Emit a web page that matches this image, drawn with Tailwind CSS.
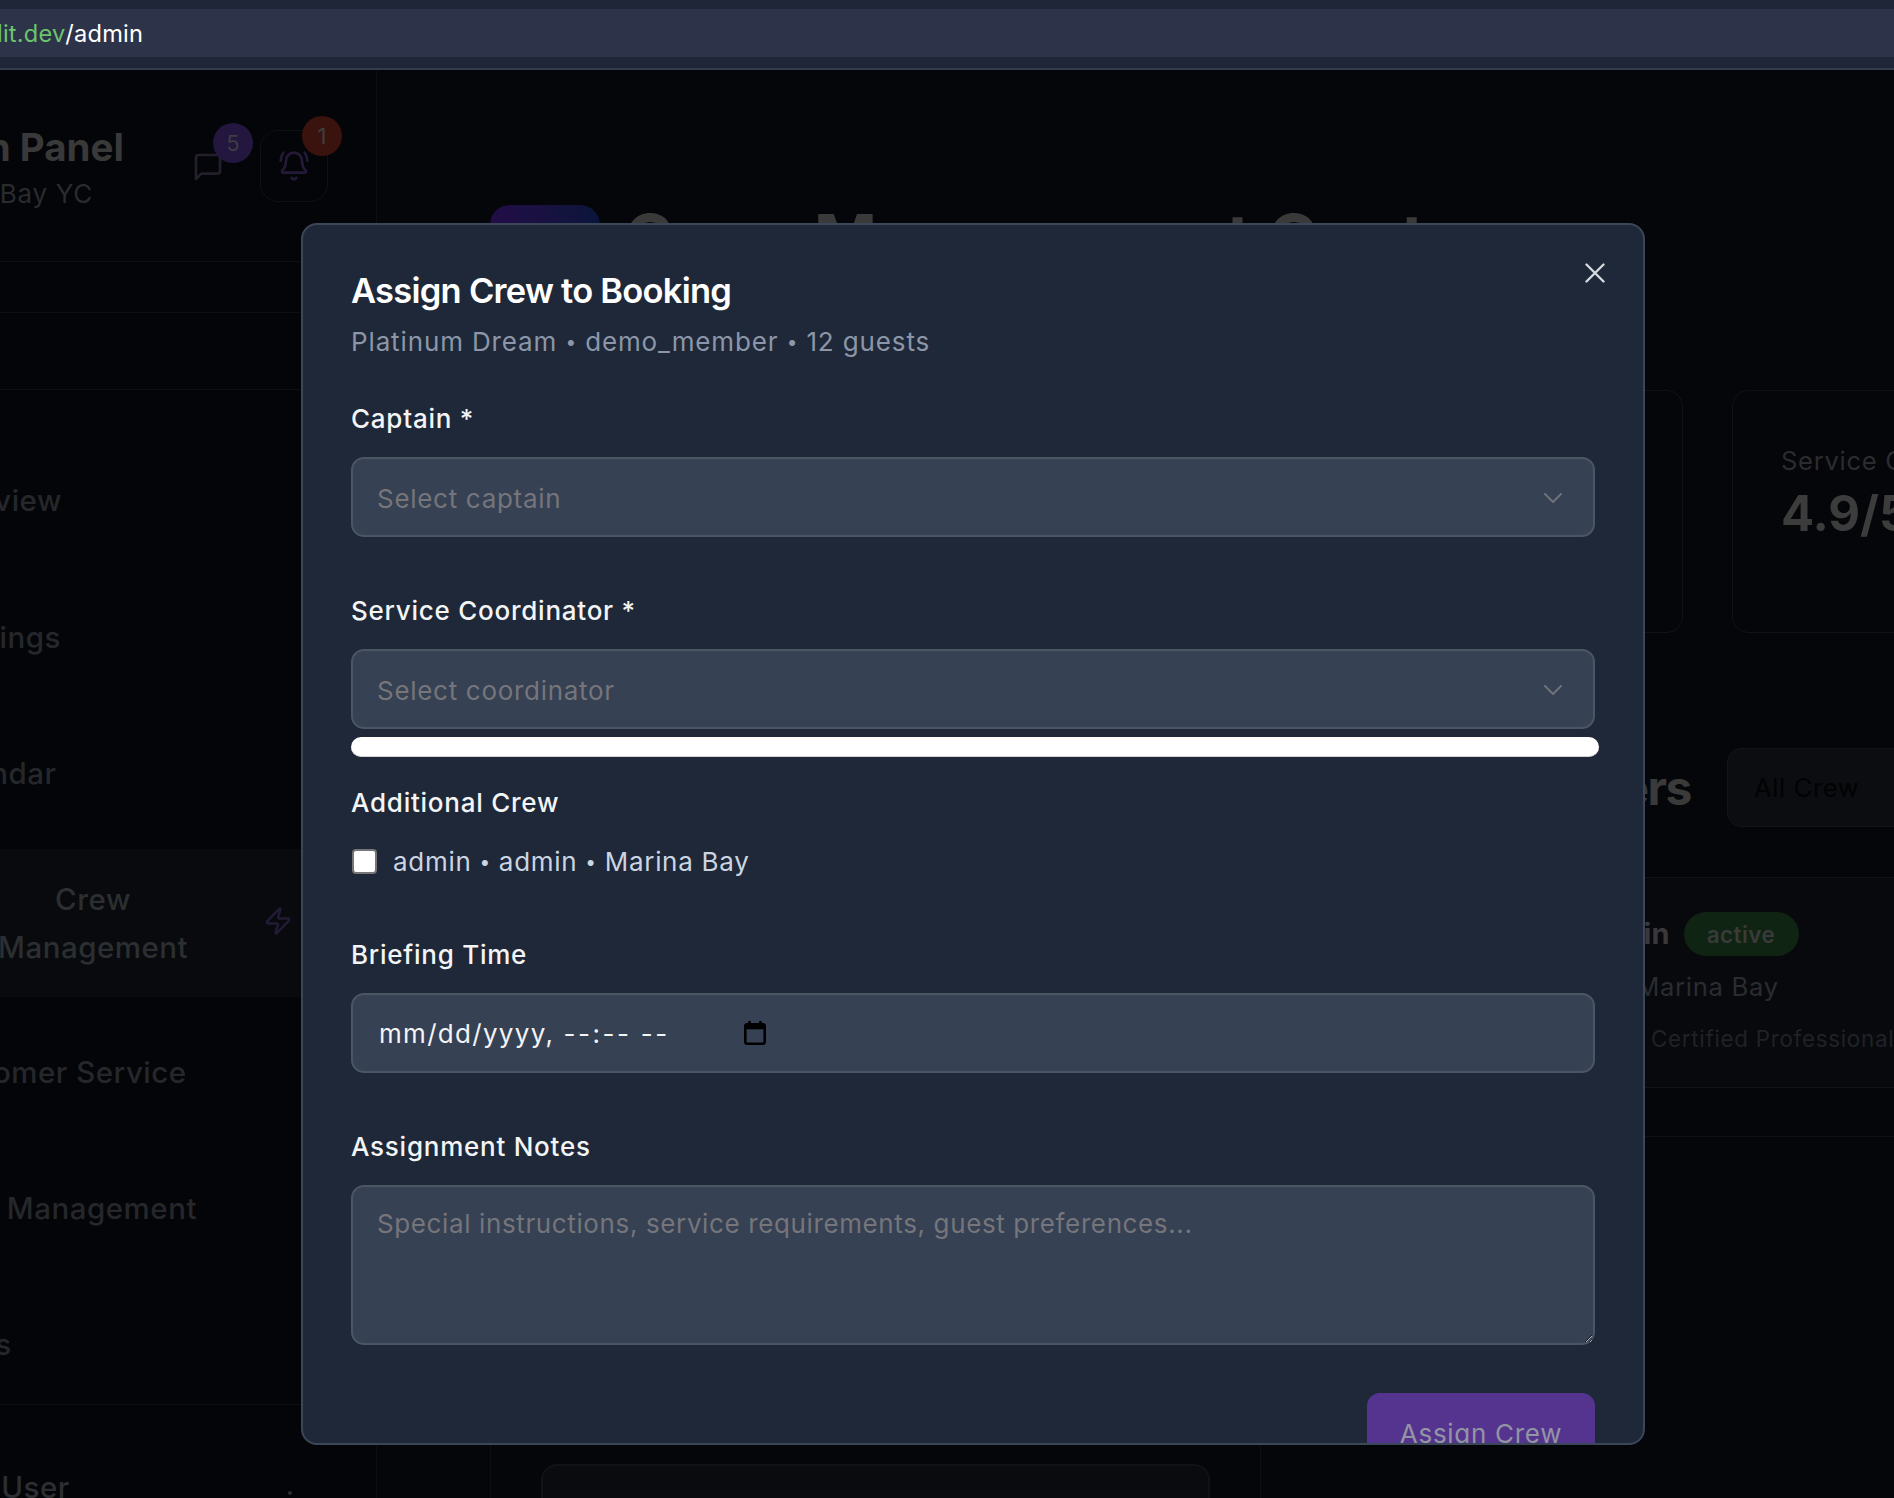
<!DOCTYPE html>
<html lang="en">
<head>
    <meta charset="UTF-8">
    <meta name="viewport" content="width=device-width, initial-scale=1.0">
    <title>Admin - Crew Management</title>
    <script src="https://cdn.jsdelivr.net/npm/@tailwindcss/browser@4"></script>
</head>
<body class="bg-[#040508] font-['Inter',sans-serif]">
<div class="relative w-[1894px] h-[1498px] overflow-hidden flex flex-col">

    <!-- browser bar -->
    <div class="h-[70px] shrink-0 bg-[#1f2637] border-b-2 border-[#333b4d] pt-[9px]">
        <div class="h-[48px] bg-[#2d3348] flex items-center pt-[2px] text-[23.6px] tracking-[0.2px] leading-none">
            <span class="-ml-[3px] text-[#6cc56c]">lit.dev</span><span class="text-white">/admin</span>
        </div>
    </div>

    <div class="flex flex-1 min-h-0">
        <!-- sidebar, scrolled off to the left -->
        <aside class="w-[577px] -ml-[200px] shrink-0 border-r border-[#0c0d11] flex flex-col">
            <div class="h-[192px] shrink-0 border-b border-[#0e0f13] pt-[54px] flex relative">
                <div class="pl-[89px] w-[395px] shrink-0">
                    <div class="text-[38.5px] leading-[46px] font-bold text-[#393939] whitespace-nowrap">Admin Panel</div>
                    <div class="text-[26px] tracking-[0.7px] leading-[38px] mt-[5px] ml-[14px] text-[#2a2b2f] whitespace-nowrap">Marina Bay YC</div>
                </div>
                <div class="relative -ml-[3px] w-[32px] h-[32px] mt-[27px]">
                    <svg class="w-[32px] h-[32px]" viewBox="0 0 24 24" fill="none" stroke="#241f2c" stroke-width="2" stroke-linecap="round" stroke-linejoin="round"><path d="M21 15a2 2 0 0 1-2 2H7l-4 4V5a2 2 0 0 1 2-2h14a2 2 0 0 1 2 2z"/></svg>
                    <span class="absolute left-[21px] -top-[28px] w-[40px] h-[40px] rounded-full bg-[#23163f] text-[#3d3d42] text-[22px] flex items-center justify-center">5</span>
                </div>
                <div class="relative ml-[36px] w-[68px] h-[72px] mt-[6px] rounded-[18px] border border-[#101114] flex items-center justify-center">
                    <svg class="w-[32px] h-[32px]" viewBox="0 0 24 24" fill="none" stroke="#241a38" stroke-width="2" stroke-linecap="round" stroke-linejoin="round"><path d="M10.268 21a2 2 0 0 0 3.464 0"/><path d="M22 8c0-2.3-.8-4.3-2-6"/><path d="M3.262 15.326A1 1 0 0 0 4 17h16a1 1 0 0 0 .74-1.673C19.41 13.956 18 12.499 18 8A6 6 0 0 0 6 8c0 4.499-1.411 5.956-2.738 7.326"/><path d="M4 2C2.8 3.7 2 5.7 2 8"/></svg>
                    <span class="absolute left-[41px] -top-[15px] w-[40px] h-[40px] rounded-full bg-[#3a120e] text-[#3f3f3f] text-[22px] flex items-center justify-center">1</span>
                </div>
            </div>
            <div class="h-[51px] shrink-0 border-b border-[#0e0f13]"></div>
            <div class="h-[77px] shrink-0 border-b border-[#0e0f13]"></div>

            <nav class="h-[1015px] shrink-0 border-b border-[#0e0f13] pt-[49px] flex flex-col gap-[13.5px] text-[29.5px] tracking-[0.5px] font-medium text-[#25272b]">
                <div class="h-[123px] shrink-0 flex items-center pl-[124px] whitespace-nowrap">Overview</div>
                <div class="h-[123px] shrink-0 flex items-center pl-[126px] whitespace-nowrap">Bookings</div>
                <div class="h-[123px] shrink-0 flex items-center pl-[125px] whitespace-nowrap">Calendar</div>
                <div class="h-[148px] shrink-0 flex items-center bg-[#080a0e] text-[#2c2f31] pl-[198px]">
                    <div class="text-center leading-[48px] w-[190px]">Crew<br>Management</div>
                    <svg class="w-[30px] h-[30px] ml-[75px] -mt-[4px]" viewBox="0 0 24 24" fill="none" stroke="#231b36" stroke-width="2" stroke-linecap="round" stroke-linejoin="round"><path d="M4 14a1 1 0 0 1-.78-1.63l9.9-10.2a.5.5 0 0 1 .86.46l-1.92 6.02A1 1 0 0 0 13 10h7a1 1 0 0 1 .78 1.63l-9.9 10.2a.5.5 0 0 1-.86-.46l1.92-6.02A1 1 0 0 0 11 14z"/></svg>
                </div>
                <div class="h-[123px] shrink-0 flex items-center pt-[2px] pl-[126px] whitespace-nowrap">Customer Service</div>
                <div class="h-[123px] shrink-0 flex items-center pl-[130px] whitespace-nowrap">User Management</div>
                <div class="h-[123px] shrink-0 flex items-center pl-[141px] whitespace-nowrap">Logs</div>
            </nav>
            <div class="flex items-center pl-[100px] pt-[60px] text-[29.5px] tracking-[0.5px] leading-[44px] font-medium text-[#2c2e32]">
                <span class="w-[380px]">Admin User</span>
                <span class="w-[4px] h-[4px] rounded-full bg-[#2c2e32] mt-[12px] ml-[8px]"></span>
            </div>
        </aside>

        <!-- main content -->
        <main class="flex-1 min-w-0 pl-[113px] bg-[#050609] flex flex-col">
            <div class="h-[320px] shrink-0 flex items-start pt-[135px]">
                <div class="w-[110px] h-[80px] rounded-[20px] bg-linear-to-r from-[#220c47] to-[#0a153a] shrink-0"></div>
                <h1 class="ml-[24px] -mt-[2px] text-[68px] leading-[70px] font-bold text-[#3a3a3a] whitespace-nowrap">Crew Management Center</h1>
            </div>

            <div class="flex gap-[49px] h-[243px] shrink-0">
                <div class="w-[365px] shrink-0 rounded-[16px] border border-[#101216]"></div>
                <div class="w-[365px] shrink-0 rounded-[16px] border border-[#101216]"></div>
                <div class="w-[365px] shrink-0 rounded-[16px] border border-[#101216]"></div>
                <div class="w-[365px] shrink-0 rounded-[16px] border border-[#101216] pl-[48px] pt-[52px]">
                    <div class="text-[25.6px] tracking-[0.7px] leading-[36px] text-[#2b2c30] whitespace-nowrap">Service Quality</div>
                    <div class="text-[49px] leading-[56px] font-bold text-[#3c3c3c] mt-[7px]">4.9/5</div>
                </div>
            </div>

            <div class="flex items-center h-[79px] mt-[115px] shrink-0">
                <h2 class="w-[1201px] shrink-0 text-right text-[48px] tracking-[-1.5px] font-bold text-[#3a3a3a] whitespace-nowrap">Crew Members</h2>
                <div class="ml-[36px] w-[300px] shrink-0 h-[79px] rounded-[14px] bg-[#0b0d11] border border-[#121418] flex items-center pl-[26px] pt-[2px] text-[25.6px] tracking-[0.6px] text-[#020203]">All Crew</div>
            </div>

            <div class="h-[211px] mt-[50px] shrink-0 bg-[#08090d] border-y border-[#111318] pt-[34px] pl-[1092px]">
                <div class="flex items-center h-[44px] whitespace-nowrap">
                    <span class="text-[29px] font-bold text-[#393939]">admin</span>
                    <span class="ml-[14px] w-[115px] h-[44px] pt-[1px] rounded-full bg-[#0f2412] text-[22.4px] tracking-[0.5px] font-semibold text-[#3a3a3a] flex items-center justify-center">active</span>
                </div>
                <div class="text-[25.6px] tracking-[0.7px] leading-[38px] mt-[12px] -ml-[54px] text-[#2a2c30] whitespace-nowrap">admin • Marina Bay</div>
                <div class="text-[22.4px] tracking-[0.7px] leading-[32px] mt-[17px] ml-[69px] text-[#1f2226] whitespace-nowrap">Certified Professional</div>
            </div>

            <div class="mt-[48px] flex-1 border-t border-[#0e0f13]">
                <div class="w-[771px] h-full border-x border-[#0e0f13] pt-[327px] pl-[50px]">
                    <div class="w-[669px] h-[100px] rounded-[16px] bg-[#090b0e] border-2 border-[#101216]"></div>
                </div>
            </div>
        </main>
    </div>

    <!-- modal -->
    <div class="absolute left-[301px] top-[223px] w-[1344px] h-[1222px] rounded-[16px] bg-[#1e2838] border-2 border-[#3b4759] overflow-hidden px-[48px] pt-[46px]">
        <button class="absolute right-[38px] top-[38px] w-[20px] h-[20px]">
            <svg class="w-[20px] h-[20px]" viewBox="0 0 20 20" fill="none" stroke="#d6d9de" stroke-width="2.4" stroke-linecap="round"><path d="M1.5 1.5l17 17M18.5 1.5l-17 17"/></svg>
        </button>

        <h2 class="text-[34.5px] tracking-[-0.75px] leading-[40px] font-semibold text-white">Assign Crew to Booking</h2>
        <p class="mt-[11px] h-[38px] pt-[1px] text-[26px] tracking-[0.87px] leading-[38px] text-[#8c96a8]">Platinum Dream <span class="text-[19px] align-[2px]">•</span> demo_member <span class="text-[19px] align-[2px]">•</span> 12 guests</p>

        <label class="block mt-[39px] mb-[18px] text-[26px] tracking-[0.75px] leading-[40px] font-medium text-[#f3f4f6]">Captain *</label>
        <div class="relative">
            <select class="block w-full h-[80px] appearance-none rounded-[13px] bg-[#364154] border-2 border-[#4b5563] pl-[24px] pt-[2px] text-[26px] tracking-[0.7px] text-[#75757a]">
                <option>Select captain</option>
            </select>
            <svg class="absolute right-[33px] top-[36px] w-[18px] h-[10px]" viewBox="0 0 18 10" fill="none" stroke="#6f7378" stroke-width="2" stroke-linecap="round" stroke-linejoin="round"><path d="M1 1l8 8 8-8"/></svg>
        </div>

        <label class="block mt-[54px] mb-[18px] text-[26px] tracking-[0.75px] leading-[40px] font-medium text-[#f3f4f6]">Service Coordinator *</label>
        <div class="relative">
            <select class="block w-full h-[80px] appearance-none rounded-[13px] bg-[#364154] border-2 border-[#4b5563] pl-[24px] pt-[2px] text-[26px] tracking-[0.7px] text-[#75757a]">
                <option>Select coordinator</option>
            </select>
            <svg class="absolute right-[33px] top-[36px] w-[18px] h-[10px]" viewBox="0 0 18 10" fill="none" stroke="#6f7378" stroke-width="2" stroke-linecap="round" stroke-linejoin="round"><path d="M1 1l8 8 8-8"/></svg>
        </div>
        <div class="mt-[8px] -mr-[4px] h-[20px] rounded-full bg-white border-b border-[#d4d4d4]"></div>

        <label class="block mt-[26px] text-[26px] tracking-[0.75px] leading-[40px] font-medium text-[#f3f4f6]">Additional Crew</label>
        <label class="flex items-center h-[38px] mt-[19px] text-[26px] tracking-[0.7px] text-[#cbd5e1]">
            <span class="ml-px w-[25px] h-[25px] rounded-[4px] bg-white border-2 border-[#767676] shrink-0"></span>
            <span class="ml-[16px]">admin <span class="text-[19px] align-[2px]">•</span> admin <span class="text-[19px] align-[2px]">•</span> Marina Bay</span>
        </label>

        <label class="block mt-[55px] mb-[18px] text-[26px] tracking-[0.75px] leading-[40px] font-medium text-[#f3f4f6]">Briefing Time</label>
        <div class="h-[80px] rounded-[13px] bg-[#364154] border-2 border-[#4b5563] flex items-center pl-[26px] text-[26px] text-[#f3f4f6]">
            <span class="w-[365px] whitespace-pre"><span class="tracking-[1.3px]">mm/dd/yyyy,</span> <span class="ml-[2px] tracking-[2.5px]">--:--</span> <span class="ml-[2px] tracking-[2.5px]">--</span></span>
            <svg class="w-[22px] h-[24px]" viewBox="0 0 22 24" fill="none"><path d="M5.5 0v4M16.5 0v4" stroke="#000" stroke-width="2.6"/><rect x="1.3" y="3.3" width="19.4" height="19.4" rx="2" stroke="#000" stroke-width="2.6"/><path d="M1.3 3.3h19.4v5h-19.4z" fill="#000"/></svg>
        </div>

        <label class="block mt-[54px] mb-[18px] text-[26px] tracking-[0.75px] leading-[40px] font-medium text-[#f3f4f6]">Assignment Notes</label>
        <textarea rows="3" class="block w-full h-[160px] rounded-[13px] bg-[#364154] border-2 border-[#4b5563] px-[24px] pt-[18px] text-[26px] tracking-[0.62px] leading-[38px] placeholder:text-[#75757a]" placeholder="Special instructions, service requirements, guest preferences..."></textarea>

        <div class="flex justify-end mt-[48px]">
            <button class="w-[228px] h-[78px] rounded-[13px] bg-[#553490] pt-[2px] text-[26px] tracking-[0.7px] text-[#9295a2]">Assign Crew</button>
        </div>
    </div>
</div>
</body>
</html>
